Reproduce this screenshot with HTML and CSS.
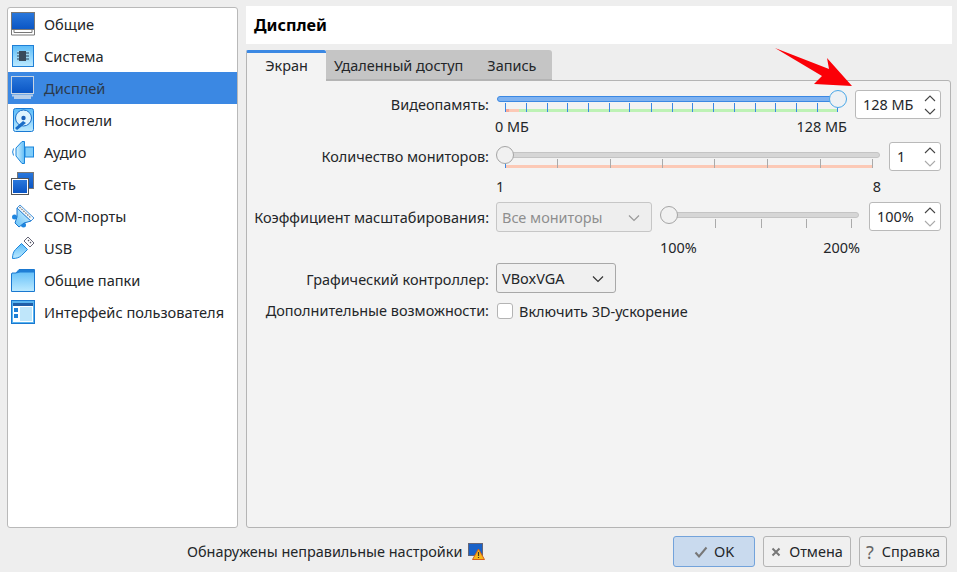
FILE: index.html
```html
<!DOCTYPE html>
<html lang="ru">
<head>
<meta charset="utf-8">
<title>Дисплей</title>
<link rel="stylesheet" href="styles.css">
</head>
<body>
<svg width="0" height="0" class="defs">
  <defs>
    <linearGradient id="scr" x1="0" y1="0" x2="0" y2="1"><stop offset="0" stop-color="#2a78dc"/><stop offset="1" stop-color="#0a55c4"/></linearGradient>
    <linearGradient id="lite" x1="0" y1="0" x2="0" y2="1"><stop offset="0" stop-color="#5cbcf8"/><stop offset="1" stop-color="#bdeaff"/></linearGradient>
    <linearGradient id="lite2" x1="0" y1="0" x2="1" y2="0"><stop offset="0" stop-color="#d4f2ff"/><stop offset="1" stop-color="#62bdf6"/></linearGradient>
    <linearGradient id="body" x1="1" y1="0" x2="0" y2="1"><stop offset="0" stop-color="#dff5ff"/><stop offset="1" stop-color="#62c0f8"/></linearGradient>
  </defs>
</svg>
<div class="main">
  <ul class="nav">
    <li class="nav-item">
      <svg class="ico" viewBox="0 0 24 24"><rect x="0.500" y="0.500" width="23" height="17" fill="url(#scr)" stroke="#777"/><path d="M0.500 17.500v5.500h23v-5.500h-2.500v3H3v-3z" fill="#fff" stroke="#777"/></svg>
      <span>Общие</span>
    </li>
    <li class="nav-item">
      <svg class="ico" viewBox="0 0 24 24"><rect x="1.500" y="1.500" width="21" height="21" fill="url(#lite)" stroke="#1f7fd6"/><rect x="6" y="7" width="13" height="10" fill="#9fd8f5"/><rect x="8" y="7" width="7" height="10" fill="#3a4a5c"/><path d="M6 9h2M6 12h2M6 15h2M15 9h3M15 12h3M15 15h3" stroke="#24435f" stroke-width="1"/></svg>
      <span>Система</span>
    </li>
    <li class="nav-item selected">
      <svg class="ico" viewBox="0 0 24 24"><rect x="0.500" y="0.500" width="22" height="17" fill="url(#scr)" stroke="#c8d4e2"/><path d="M1 18.500h21v2h-2v2.500H3v-2.500H1z" fill="#b5cde9"/></svg>
      <span>Дисплей</span>
    </li>
    <li class="nav-item">
      <svg class="ico" viewBox="0 0 24 24"><rect x="2.500" y="0.500" width="20" height="23" rx="2" fill="url(#lite)" stroke="#1a7ad4"/><circle cx="12.500" cy="10" r="8" fill="#dff4ff" stroke="#1a6ec8"/><circle cx="12.500" cy="10" r="2.200" fill="#1a5fb8"/><path d="M12 13L4 20l2 2 9-7z" fill="#1a6ec8"/></svg>
      <span>Носители</span>
    </li>
    <li class="nav-item">
      <svg class="ico" viewBox="0 0 24 24"><path d="M5 8l6-6.500h2.500v22H11L5 16z" fill="url(#lite2)" stroke="#1a85dc"/><rect x="14" y="7" width="8.500" height="10" fill="#7fcdfa" stroke="#1a85dc"/><path d="M2.500 8.500a8 8 0 0 0 0 7" fill="none" stroke="#1a85dc"/></svg>
      <span>Аудио</span>
    </li>
    <li class="nav-item">
      <svg class="ico" viewBox="0 0 24 24"><rect x="6.500" y="0.500" width="16" height="16" fill="url(#scr)" stroke="#777"/><rect x="0.500" y="6.500" width="17" height="16" fill="#fff" stroke="#555"/><rect x="2" y="8" width="14" height="13" fill="url(#scr)"/></svg>
      <span>Сеть</span>
    </li>
    <li class="nav-item">
      <svg class="ico" viewBox="0 0 24 24"><circle cx="3.500" cy="13" r="2.500" fill="#1f86e0"/><circle cx="12.500" cy="21" r="2.500" fill="#1f86e0"/><path d="M6 4L20 17l-7 2-5 4-4-4 2-6z" fill="url(#body)" stroke="#1a78d0"/><path d="M9 1L23 14l-3 3L6 4z" fill="#f4f8fb" stroke="#1a78d0" stroke-width="0.800"/><path d="M8.500 3l11.500 11" stroke="#777" stroke-width="1.200" stroke-dasharray="1.500 1.200"/></svg>
      <span>COM-порты</span>
    </li>
    <li class="nav-item">
      <svg class="ico" viewBox="0 0 24 24"><path d="M1.500 22.500c0-4 1-7 3-9l6-6 6 6-6 6c-2 2-5 3-9 3z" fill="url(#lite)" stroke="#1a85dc"/><path d="M13 5l4-4 6 6-4 4z" fill="#fff" stroke="#667"/><path d="M17 5l1-1M19 7l1-1" stroke="#556" stroke-width="1.300"/></svg>
      <span>USB</span>
    </li>
    <li class="nav-item">
      <svg class="ico" viewBox="0 0 24 24"><path d="M0.500 6V23.500H23.500V1.500H8L5 5H1z" fill="url(#lite)" stroke="#1a78d0"/><path d="M5 5.500L8 2h15v2.500H9z" fill="#1f7fd6"/></svg>
      <span>Общие папки</span>
    </li>
    <li class="nav-item">
      <svg class="ico" viewBox="0 0 24 24"><rect x="0.500" y="0.500" width="23" height="23" fill="#58b4f0" stroke="#1a78d0"/><rect x="2" y="3" width="20" height="3" fill="#1f5ea8"/><rect x="2" y="6" width="20" height="16" fill="#fff"/><rect x="9" y="7" width="12" height="14" fill="#bfe6fa"/><rect x="3" y="8" width="4" height="4" fill="#1f7fd6"/><rect x="3" y="14" width="4" height="4" fill="#1f7fd6"/></svg>
      <span>Интерфейс пользователя</span>
    </li>
  </ul>

  <div class="content">
    <h1 class="title">Дисплей</h1>
    <div class="tabs">
      <div class="tab active">Экран</div>
      <div class="tab-rest">
        <div class="tab">Удаленный доступ</div>
        <div class="tab">Запись</div>
      </div>
    </div>
    <div class="panel">
      <div class="form">
        <div class="lbl row-a">Видеопамять:</div>
        <div class="ctl row-a">
          <div class="slider w351">
            <div class="track blue"><span class="knob blue-knob end"></span></div>
            <svg class="ticks" width="351" height="9" viewBox="0 0 351 9">
              <rect x="9" y="6" width="4" height="3" fill="#f7a99a"/><rect x="13" y="6" width="10" height="3" fill="#fcc9b6"/><rect x="23" y="6" width="319" height="3" fill="#bdf2b5"/>
              <path d="M9.500 0v9M30.500 0v9M51.500 0v9M71.500 0v9M92.500 0v9M113.500 0v9M133.500 0v9M155.500 0v9M176.500 0v9M196.500 0v9M217.500 0v9M238.500 0v9M259.500 0v9M279.500 0v9M300.500 0v9M321.500 0v9M341.500 0v9" stroke="#3b88e3"/>
            </svg>
            <div class="scale"><span>0 МБ</span><span>128 МБ</span></div>
          </div>
          <div class="spin w86"><span>128 МБ</span>
            <svg class="arrows" width="14" height="24" viewBox="0 0 14 24"><path d="M2 8l5-5 5 5" class="on"/><path d="M2 16l5 5 5-5" class="on"/></svg>
          </div>
        </div>

        <div class="lbl row-b">Количество мониторов:</div>
        <div class="ctl row-b">
          <div class="slider w385 pad">
            <div class="track"><span class="knob"></span></div>
            <svg class="ticks" width="385" height="9" viewBox="0 0 385 9">
              <rect x="9" y="6" width="367" height="3" fill="#fcc9b6"/>
              <path d="M61.500 0v9M114.500 0v9M166.500 0v9M218.500 0v9M271.500 0v9M324.500 0v9M376.500 0v9" stroke="#aaa"/>
              <path d="M9.500 0v9" stroke="#3b88e3"/>
            </svg>
            <div class="scale low near"><span>1</span><span>8</span></div>
          </div>
          <div class="spin w52"><span>1</span>
            <svg class="arrows" width="14" height="24" viewBox="0 0 14 24"><path d="M2 8l5-5 5 5" class="on"/><path d="M2 16l5 5 5-5" class="off"/></svg>
          </div>
        </div>

        <div class="lbl row-c">Коэффициент масштабирования:</div>
        <div class="ctl row-c">
          <div class="select disabled w156"><span>Все мониторы</span>
            <svg class="chev" width="12" height="8" viewBox="0 0 12 8"><path d="M1 1.500l5 5 5-5"/></svg>
          </div>
          <div class="slider w200 pad">
            <div class="track"><span class="knob"></span></div>
            <svg class="ticks" width="200" height="9" viewBox="0 0 200 9">
              <path d="M55.500 0v9M101.500 0v9M146.500 0v9M191.500 0v9" stroke="#aaa"/>
              <path d="M9.500 0v4" stroke="#3b88e3"/>
            </svg>
            <div class="scale low"><span>100%</span><span>200%</span></div>
          </div>
          <div class="spin w72"><span>100%</span>
            <svg class="arrows" width="14" height="24" viewBox="0 0 14 24"><path d="M2 8l5-5 5 5" class="on"/><path d="M2 16l5 5 5-5" class="off"/></svg>
          </div>
        </div>

        <div class="lbl row-d">Графический контроллер:</div>
        <div class="ctl row-d">
          <div class="select w120"><span>VBoxVGA</span>
            <svg class="chev" width="12" height="8" viewBox="0 0 12 8"><path d="M1 1.500l5 5 5-5"/></svg>
          </div>
        </div>

        <div class="lbl row-e">Дополнительные возможности:</div>
        <div class="ctl row-e">
          <label class="check"><span class="box"></span><span class="check-text">Включить 3D-ускорение</span></label>
        </div>
      </div>
    </div>
  </div>
</div>

<div class="footer">
  <span class="warn">Обнаружены неправильные настройки</span>
  <svg class="warn-ico" width="17" height="17" viewBox="0 0 17 17"><rect x="0.500" y="0.500" width="14" height="12" fill="#1a62c8" stroke="#667"/><path d="M10.500 6L16.500 16.500H4.500z" fill="#f8b81c" stroke="#d4601a"/><path d="M10.500 9v4M10.500 14v1" stroke="#432" stroke-width="1.200"/></svg>
  <div class="buttons">
    <button class="btn default">
      <svg width="14" height="12" viewBox="0 0 14 12"><path d="M1.500 6.500l3.500 4 7.500-9" fill="none" stroke="#777" stroke-width="2"/></svg>
      <span>OK</span>
    </button>
    <button class="btn">
      <svg width="10" height="10" viewBox="0 0 10 10"><path d="M1.500 1.500l7 7M8.500 1.500l-7 7" fill="none" stroke="#777" stroke-width="2"/></svg>
      <span>Отмена</span>
    </button>
    <button class="btn">
      <span class="q">?</span>
      <span>Справка</span>
    </button>
  </div>
</div>

<svg class="pointer" width="80" height="42" viewBox="0 0 80 42"><polygon points="0,0 54,21 52,10 77,38 39,36 47,28" fill="#fb0007"/></svg>
</body>
</html>
```
FILE: styles.css
```css
* { box-sizing: border-box; }
html, body { margin: 0; height: 100%; }
body {
  width: 957px;
  height: 572px;
  overflow: hidden;
  background: #eeeeee;
  color: #232629;
  font-family: "Noto Sans", sans-serif;
  font-size: 14.45px;
  line-height: 20px;
  padding: 6px 5px 0 7px;
  position: relative;
}
.defs { position: absolute; }

.main { display: flex; gap: 8px; height: 522px; }

.nav {
  list-style: none;
  margin: 1px 0 0;
  padding: 0;
  width: 231px;
  height: 521px;
  background: #fff;
  border: 1px solid #b9b9b9;
  border-radius: 3px;
  font-size: 14.6px;
}
.nav-item {
  display: flex;
  align-items: center;
  height: 32px;
  padding-left: 3px;
  gap: 9px;
}
.nav-item.selected { background: #3b88e3; color: #2b3a4c; }
.ico { width: 24px; height: 24px; flex: none; }

.content { flex: 1; display: flex; flex-direction: column; min-width: 0; }
.title {
  margin: 0;
  height: 38px;
  padding-left: 8px;
  background: #fff;
  font-size: 16.2px;
  font-weight: 700;
  line-height: 38px;
  color: #000;
}
.tabs { display: flex; margin-top: 6px; height: 31px; position: relative; z-index: 1; }
.tab { line-height: 31px; }
.tab.active {
  width: 80px;
  text-align: center;
  background: #f3f3f3;
  border-top: 3px solid #3b88e3;
  border-left: 1px solid #b4b4b4;
  border-radius: 2px 2px 0 0;
  line-height: 25px;
}
.tab-rest {
  display: flex;
  background: #c5c5c5;
  border-bottom: 1px solid #b4b4b4;
  border-radius: 0 3px 0 0;
  padding-left: 8px;
  gap: 24px;
  width: 226px;
  height: 30px;
}
.tab-rest .tab { line-height: 32px; }

.panel {
  flex: 1;
  margin-top: -1px;
  margin-right: 1px;
  background: #f3f3f3;
  border: 1px solid #b4b4b4;
  border-radius: 0 3px 3px 3px;
  padding-top: 9px;
}
.form {
  display: grid;
  grid-template-columns: 242px 1fr;
  grid-template-rows: 47px 55px 56px 30px 22px;
  row-gap: 5px;
  column-gap: 7px;
}
.lbl { text-align: right; padding-top: 5px; white-space: nowrap; }
.lbl.row-c { padding-top: 6px; }
.lbl.row-d { padding-top: 7px; }
.lbl.row-e { padding-top: 1px; margin-top: 2px; }
.ctl { display: flex; align-items: flex-start; gap: 8px; }
.ctl.row-c .spin { margin-left: 1px; }
.ctl.row-e { margin-top: 2px; }

.slider { position: relative; flex: none; padding-top: 6px; }
.slider.pad { padding-top: 10px; }
.w351 { width: 351px; }
.w385 { width: 385px; }
.w200 { width: 200px; }
.track {
  position: relative;
  height: 6px;
  margin: 0 1px;
  background: #d6d6d6;
  border: 1px solid #c4c4c4;
  border-radius: 3px;
}
.track.blue { margin-right: 9px; background: #7fb2f0; border-color: #3b88e3; }
.knob {
  position: absolute;
  left: -2px;
  top: -7px;
  width: 18px;
  height: 18px;
  border-radius: 50%;
  background: #f1f1f1;
  border: 1px solid #a5a5a5;
}
.knob.blue-knob { border-color: #4aa8e8; background: #eef1f4; }
.knob.end { left: auto; right: -10px; }
.ticks { display: block; margin-top: 1px; overflow: visible; }
.scale { display: flex; justify-content: space-between; margin-top: 5px; margin-left: -1px; }
.scale.low { margin-top: 10px; margin-left: 0; }
.scale.near { margin-top: 9px; }

.spin {
  flex: none;
  display: flex;
  align-items: center;
  justify-content: space-between;
  height: 29px;
  padding: 0 3px 0 7px;
  background: #fff;
  border: 1px solid #b9b9b9;
  border-radius: 3px;
}
.w86 { width: 86px; }
.w52 { width: 52px; }
.w72 { width: 72px; }
.arrows path { fill: none; stroke-width: 1.1; }
.arrows .on { stroke: #444; }
.arrows .off { stroke: #aaa; }

.select {
  flex: none;
  display: flex;
  align-items: center;
  justify-content: space-between;
  height: 30px;
  padding: 1px 11px 0 5px;
  background: #f0f0f0;
  border: 1px solid #a8a8a8;
  border-radius: 3px;
}
.select.disabled { color: #8e8e8e; border-color: #c6c6c6; background: #eeeeee; }
.w156 { width: 156px; }
.w120 { width: 120px; }
.chev path { fill: none; stroke: #333; stroke-width: 1.2; }
.disabled .chev path { stroke: #999; }

.check { display: flex; align-items: center; gap: 6px; margin-left: 1px; }
.check-text { padding-top: 2px; }
.box {
  width: 16px;
  height: 16px;
  background: #fff;
  border: 1px solid #b4b4b4;
  border-radius: 3px;
}

.footer { display: flex; align-items: center; height: 31px; margin: 8px 5px 0 180px; }
.warn { white-space: nowrap; }
.warn-ico { margin-left: 6px; flex: none; }
.buttons { display: flex; gap: 8px; margin-left: auto; }
.btn {
  display: flex;
  align-items: center;
  justify-content: center;
  gap: 8px;
  width: 88px;
  height: 31px;
  padding: 0;
  background: #f0f0f0;
  border: 1px solid #b4b4b4;
  border-radius: 3px;
  color: inherit;
  font: inherit;
}
.btn.default { width: 82px; background: #c9daee; border-color: #73a3db; gap: 6px; }
.q { color: #666; font-size: 18px; }

.pointer { position: absolute; left: 775px; top: 48px; }
```
